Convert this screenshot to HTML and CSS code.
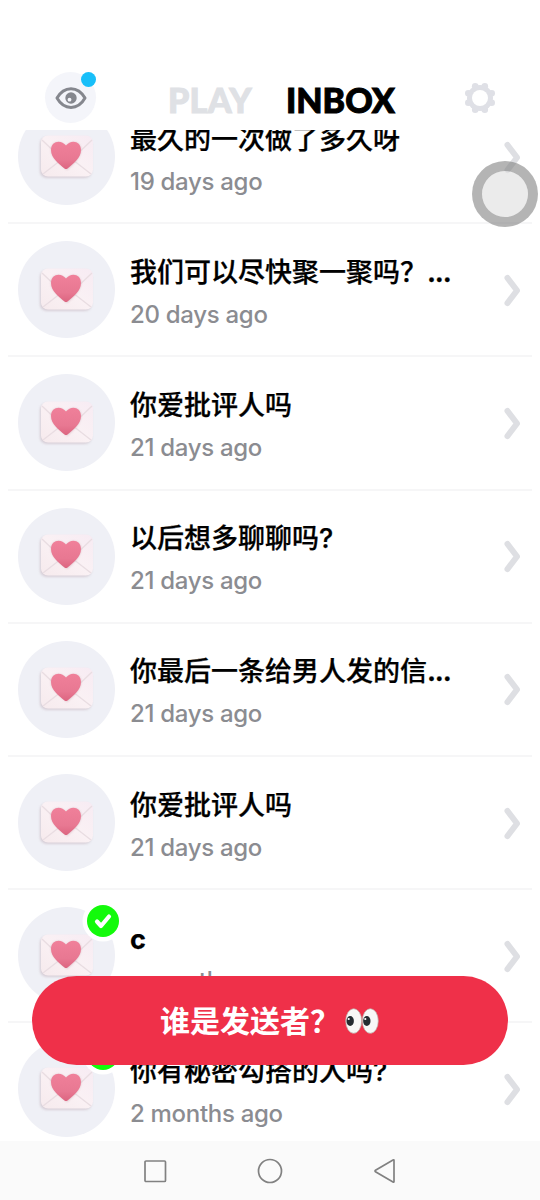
FILE: index.html
```html
<!DOCTYPE html>
<html lang="zh-CN">
<head>
<meta charset="utf-8">
<title>Inbox</title>
<link rel="stylesheet" href="styles.css">
</head>
<body>
<svg class="defs" width="0" height="0" aria-hidden="true">
  <defs>
    <linearGradient id="paper" x1="0" y1="1" x2="1" y2="0">
      <stop offset="0" stop-color="#f6eaed"/><stop offset=".5" stop-color="#faf1f4"/><stop offset="1" stop-color="#f7ebf3"/>
    </linearGradient>
    <linearGradient id="heartFill" x1="0" y1="0" x2="0" y2="1">
      <stop offset="0" stop-color="#f0809a"/><stop offset=".65" stop-color="#e87892"/><stop offset="1" stop-color="#dc6580"/>
    </linearGradient>
    <filter id="soft" x="-20%" y="-20%" width="140%" height="140%"><feGaussianBlur stdDeviation="1"/></filter>
    <symbol id="letter" viewBox="0 0 60 50">
      <rect x="2.800" y="5" width="52" height="41" rx="7" fill="#cfc3cc" opacity=".75" filter="url(#soft)"/>
      <rect x="4" y="3.500" width="52" height="41" rx="7" fill="url(#paper)"/>
      <path d="M5 8 25 27Q30 31 35 27L55 8M6 42 24 28M54 42 36 28" fill="none" stroke="#e9dde2" stroke-width="1.300"/>
      <path d="M30 38C25 33 14 26 14 18C14 9 24 8 29 14C34 8 44 9 44 18C44 26 35 33 30 38Z" fill="#c9a2ad" opacity=".6" filter="url(#soft)"/>
      <path d="M30.500 36.500C29.500 37.300 28.500 37.300 27.500 36.500C22 32 14 26 14 18C14 9 24 7 29 13.500C34 7 44 9 44 18C44 26 36 32 30.500 36.500Z" fill="url(#heartFill)"/>
    </symbol>
    <symbol id="chevron" viewBox="0 0 20 34"><path d="M4.500 5 14 17.500 4.500 30" fill="none" stroke="#dedfe3" stroke-width="6" stroke-linecap="round" stroke-linejoin="round"/></symbol>
    <symbol id="check" viewBox="0 0 42 42"><circle cx="21" cy="21" r="20.500" fill="#fff"/><circle cx="21" cy="21" r="16" fill="#13fa0b"/><path d="M15 21.500 19 26 27 16.500" fill="none" stroke="#fff" stroke-width="4.200" stroke-linecap="round" stroke-linejoin="round"/></symbol>
  </defs>
</svg>
<div class="screen">
  <header class="header">
    <div class="viewer">
      <svg width="32" height="24" viewBox="0 0 32 24"><path d="M2 12C9-.5 23-.5 30 12C23 24.500 9 24.500 2 12Z" fill="none" stroke="#85878e" stroke-width="3" stroke-linejoin="round"/><circle cx="16" cy="12" r="5.700" fill="#85878e"/><circle cx="14.500" cy="13.700" r="1.900" fill="#f4f5fa"/></svg>
      <span class="viewer-dot"></span>
    </div>
    <nav class="tabs"><span class="tab">PLAY</span><span class="tab tab-active">INBOX</span></nav>
    <svg class="gear" width="32" height="32" viewBox="-16 -16 32 32"><g fill="#dfe0e6"><circle r="13"/><circle cx="4.800" cy="-11.700" r="3.300"/><circle cx="11.700" cy="-4.800" r="3.300"/><circle cx="11.700" cy="4.800" r="3.300"/><circle cx="4.800" cy="11.700" r="3.300"/><circle cx="-4.800" cy="11.700" r="3.300"/><circle cx="-11.700" cy="4.800" r="3.300"/><circle cx="-11.700" cy="-4.800" r="3.300"/><circle cx="-4.800" cy="-11.700" r="3.300"/></g><circle r="8" fill="#fff"/></svg>
  </header>
  <main class="inbox">
    <ul class="messages">
      <li class="message"><div class="avatar"><svg class="letter"><use href="#letter"/></svg></div><div class="copy"><div class="title">最久的一次做了多久呀</div><div class="time">19 days ago</div></div><svg class="chevron"><use href="#chevron"/></svg></li>
      <li class="message"><div class="avatar"><svg class="letter"><use href="#letter"/></svg></div><div class="copy"><div class="title">我们可以尽快聚一聚吗？<b>...</b></div><div class="time">20 days ago</div></div><svg class="chevron"><use href="#chevron"/></svg></li>
      <li class="message"><div class="avatar"><svg class="letter"><use href="#letter"/></svg></div><div class="copy"><div class="title">你爱批评人吗</div><div class="time">21 days ago</div></div><svg class="chevron"><use href="#chevron"/></svg></li>
      <li class="message"><div class="avatar"><svg class="letter"><use href="#letter"/></svg></div><div class="copy"><div class="title">以后想多聊聊吗?</div><div class="time">21 days ago</div></div><svg class="chevron"><use href="#chevron"/></svg></li>
      <li class="message"><div class="avatar"><svg class="letter"><use href="#letter"/></svg></div><div class="copy"><div class="title">你最后一条给男人发的信<b>...</b></div><div class="time">21 days ago</div></div><svg class="chevron"><use href="#chevron"/></svg></li>
      <li class="message"><div class="avatar"><svg class="letter"><use href="#letter"/></svg></div><div class="copy"><div class="title">你爱批评人吗</div><div class="time">21 days ago</div></div><svg class="chevron"><use href="#chevron"/></svg></li>
      <li class="message"><div class="avatar"><svg class="letter"><use href="#letter"/></svg><svg class="check"><use href="#check"/></svg></div><div class="copy"><div class="title title-latin">c</div><div class="time">a month ago</div></div><svg class="chevron"><use href="#chevron"/></svg></li>
      <li class="message"><div class="avatar"><svg class="letter"><use href="#letter"/></svg><svg class="check"><use href="#check"/></svg></div><div class="copy"><div class="title">你有秘密勾搭的人吗?</div><div class="time">2 months ago</div></div><svg class="chevron"><use href="#chevron"/></svg></li>
    </ul>
  </main>
  <footer class="system-nav">
    <svg width="24" height="24" viewBox="0 0 24 24"><rect x="2" y="2" width="20.500" height="20.500" rx="1"/></svg>
    <svg width="26" height="26" viewBox="0 0 26 26"><circle cx="13" cy="13" r="11.500"/></svg>
    <svg width="24" height="26" viewBox="0 0 24 26"><path d="M21 2.500V23.500Q21 24.500 20 24L2.500 13.800Q1.500 13 2.500 12.200L20 2Q21 1.500 21 2.500Z"/></svg>
  </footer>
  <button class="reveal"><span>谁是发送者？</span>
    <svg class="eyes" width="34" height="26" viewBox="0 0 34 26"><g fill="#f8f8f7" stroke="#b9a7a2" stroke-width=".7"><ellipse cx="8.700" cy="13" rx="8" ry="12.300"/><ellipse cx="25.300" cy="13" rx="8" ry="12.300"/></g><g fill="#252c31"><ellipse cx="5.200" cy="13" rx="3.700" ry="5"/><ellipse cx="21.800" cy="13" rx="3.700" ry="5"/></g><circle cx="3.700" cy="11" r="1.100" fill="#fff"/><circle cx="20.300" cy="11" r="1.100" fill="#fff"/></svg>
  </button>
  <div class="assist"></div>
</div>
</body>
</html>
```
FILE: styles.css
```css
* { box-sizing: border-box; }
body { margin: 0; background: #fff; }
svg { display: block; }
.defs { position: absolute; }
.screen { position: relative; display: flex; flex-direction: column; width: 540px; height: 1200px; overflow: hidden; background: #fff; font-family: Inter, "Noto Sans CJK SC", sans-serif; }
.header { display: flex; flex: none; align-items: flex-start; height: 130px; padding: 72px 44px 0 45px; }
.viewer { position: relative; display: flex; align-items: center; justify-content: center; width: 51px; height: 51px; border-radius: 50%; background: #f4f5fa; }
.viewer-dot { position: absolute; top: 0; right: 0; width: 15px; height: 15px; border-radius: 50%; background: #18bff9; }
.tabs { display: flex; gap: 29px; margin-left: 72px; padding-top: 6px; font: 900 34px/44px Lato, sans-serif; }
.tab { width: 89px; color: #dfe1e5; letter-spacing: .3px; -webkit-text-stroke: 1px currentColor; }
.tab-active { width: 112px; letter-spacing: 0; color: #000; }
.gear { margin: 10px 0 0 auto; }
.inbox { flex: 1; min-height: 0; overflow: hidden; }
.messages { margin: -39px 0 0; padding: 0 8px; list-style: none; }
.message { display: flex; align-items: center; height: 133.2px; padding: 0 9px 0 10px; border-bottom: 2px solid #f6f6f7; }
.avatar { position: relative; display: flex; align-items: center; justify-content: center; flex: none; width: 97px; height: 97px; border-radius: 50%; background: #eff0f6; }
.letter { width: 60px; height: 50px; }
.check { position: absolute; top: -7px; right: -9px; width: 42px; height: 42px; }
.copy { flex: 1; min-width: 0; padding: 8px 0 0 15px; white-space: nowrap; }
.title { height: 43px; color: #000; font-size: 27px; font-weight: 500; line-height: 44px; -webkit-text-stroke: .25px #000; }
.title b { font-weight: 700; letter-spacing: -1.2px; }
.title-latin { font-weight: 700; line-height: 46px; }
.time { height: 43px; color: #8b8c91; font-size: 24px; font-weight: 500; line-height: 42px; letter-spacing: -.3px; }
.chevron { width: 20px; height: 34px; }
.system-nav { display: flex; align-items: center; justify-content: center; gap: 90px; flex: none; height: 59px; background: #fafafa; }
.system-nav svg { fill: none; stroke: #818181; stroke-width: 1.7; }
.reveal { position: absolute; top: 976px; left: 32px; display: flex; align-items: center; justify-content: center; gap: 5px; width: 476px; height: 89px; padding: 0 1px 4px 0; border: 0; border-radius: 45px; color: #fff; background: #ef3049; font: 700 30px/40px "Noto Sans CJK SC", sans-serif; white-space: nowrap; }
.eyes { margin-top: 4px; }
.assist { position: absolute; top: 161px; left: 472px; width: 66px; height: 66px; border: 10px solid rgba(125, 125, 125, .58); border-radius: 50%; background: rgba(225, 225, 225, .65); background-clip: padding-box; }
```
